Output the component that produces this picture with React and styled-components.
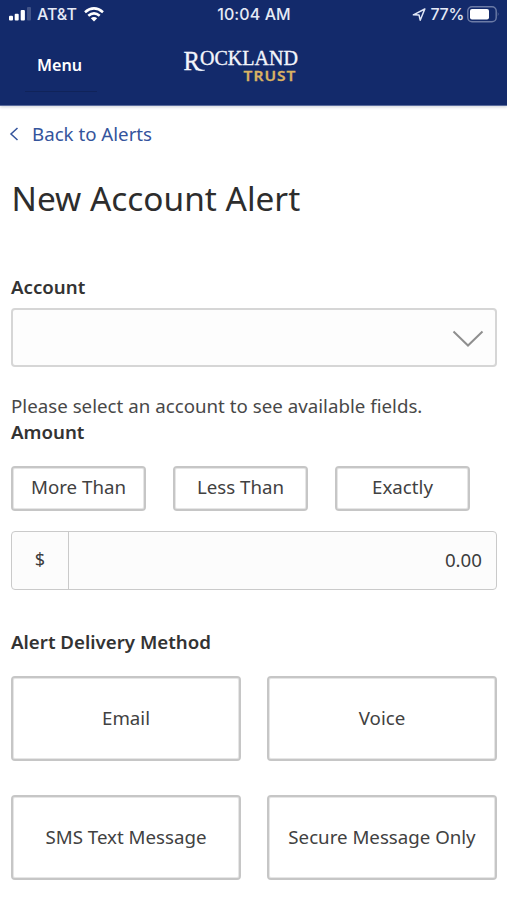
import React, { useState } from 'react';
import styled, { createGlobalStyle } from 'styled-components';


const GlobalStyle = createGlobalStyle`
    * {
        box-sizing: border-box;
    }
    body {
        margin: 0;
        background: #fff;
        color: #3d3d3d;
        font-family: "Noto Sans", "Open Sans", sans-serif;
        font-size: 18.7px;
    }
    button, input {
        font: inherit;
        color: inherit;
    }
`

const Page = styled.div`
    width: 507px;
    height: 900px;
    overflow: hidden;
`

const Header = styled.header`
    height: 106px;
    background: #132a6b;
    border-bottom: 1px solid #5a6b9c;
    box-shadow: 0 1px 3px rgba(0, 20, 60, .2);
    color: #fff;
`

const StatusBar = styled.div`
    display: grid;
    grid-template-columns: 1fr auto 1fr;
    align-items: center;
    height: 28px;
    padding: 0 7px 0 8px;
    font-family: Inter, sans-serif;
    font-size: 16px;
    font-weight: 500;
    line-height: 28px;
    color: #e6eaf6;

    svg {
        display: block;
    }
`

const StatusGroup = styled.div`
    display: flex;
    align-items: center;
    justify-content: ${({ $end }) => $end ? 'flex-end' : 'flex-start'};
`

const Carrier = styled.span`
    width: 40px;
    margin: 0 7px 0 6px;
    letter-spacing: 0;
`

const Clock = styled.span`
    letter-spacing: .1px;
`

const Percent = styled.span`
    margin: 0 3px 0 4px;
    letter-spacing: -.3px;
`

const NavBar = styled.div`
    display: flex;
    padding-left: 25px;
`

const MenuButton = styled.button`
    width: 72px;
    height: 64px;
    padding: 10px 0 0 12px;
    border: 0;
    border-bottom: 1px solid #10235a;
    background: none;
    font-size: 16.2px;
    font-weight: 600;
    text-align: left;
`

const Logo = styled.svg`
    margin: 14px 0 0 82px;
`

const Content = styled.main`
    padding: 0 10px 0 11px;
`

const BackLink = styled.a`
    display: flex;
    align-items: center;
    gap: 13px;
    height: 55px;
    margin-left: -2px;
    color: #34549c;
    font-size: 18.7px;
`

const Title = styled.h1`
    height: 71px;
    margin: 0 0 43px;
    font-size: 33.4px;
    font-weight: 400;
    line-height: 74px;
    text-indent: .5px;
    color: #2d2d2d;
`

const Label = styled.div`
    height: 26px;
    font-weight: 600;
    line-height: 24px;
    color: #333;
    margin-bottom: ${({ $gap }) => $gap}px;
`

const Select = styled.button`
    display: flex;
    align-items: center;
    justify-content: flex-end;
    width: 100%;
    height: 59px;
    padding: 2px 11px 0 12px;
    border: 2px solid #d6d6d6;
    border-radius: 4px;
    background: #fdfdfd;
`

const Help = styled.p`
    height: 26px;
    margin: 27px 0 0;
    line-height: 24px;
    letter-spacing: .02px;
    color: #484848;
`

const Conditions = styled.div`
    display: grid;
    grid-template-columns: repeat(3, 135px);
    column-gap: 27px;
`

const Methods = styled.div`
    display: grid;
    grid-template-columns: repeat(2, 1fr);
    column-gap: 26px;
    row-gap: 34px;
`

const Choice = styled.button`
    height: ${({ $tall }) => $tall ? 85 : 45}px;
    padding: 0 0 ${({ $tall }) => $tall ? 3 : 4}px;
    border: 2px solid #c6c6c6;
    border-radius: 4px;
    background: #fff;
    box-shadow: inset 0 0 0 1px #e6e6e6;
    color: #414141;
    white-space: nowrap;
`

const AmountField = styled.div`
    display: flex;
    height: 59px;
    margin: 20px 0 40px;
    border: 1px solid #cacaca;
    border-radius: 4px;
    background: #fcfcfc;
`

const Currency = styled.span`
    width: 57px;
    border-right: 1px solid #cacaca;
    font-size: 18px;
    line-height: 55px;
    text-align: center;
`

const AmountInput = styled.input`
    flex: 1;
    min-width: 0;
    padding: 0 14px 3px;
    border: 0;
    background: none;
    text-align: right;
`


const Signal = () => (
    <svg width="23" height="14" viewBox="0 0 23 14" fill="#fff">
        <rect x="1" y="8.8" width="4" height="4.8" rx="1" />
        <rect x="6.7" y="6.8" width="4" height="6.8" rx="1" />
        <rect x="12.7" y="3" width="4.2" height="10.6" rx="1" />
        <rect x="19" y="0" width="4" height="13.6" rx="1" opacity=".2" />
    </svg>
)

const Wifi = () => (
    <svg width="20" height="15" viewBox="0 0 20 15" fill="none" stroke="#fff" strokeWidth="2.6">
        <path d="M1 5.2 Q10 -2.4 19 5.2" />
        <path d="M4.3 8.8 Q10 4 15.7 8.8" />
        <path d="M10 14.5 L6.8 11.3 Q10 8.6 13.2 11.3Z" fill="#fff" stroke="none" />
    </svg>
)

const Arrow = () => (
    <svg width="14" height="14" viewBox="0 0 14 14" fill="none" stroke="#dfe5f5" strokeWidth="1.5" strokeLinejoin="round">
        <path d="M12.8 2 L1.4 7.8 L7 7.9 L8.2 13.2Z" />
    </svg>
)

const Battery = () => (
    <svg width="33" height="17" viewBox="0 0 33 17">
        <rect x=".8" y=".8" width="28.4" height="15" rx="4.2" fill="none" stroke="#6c7ba6" strokeWidth="1.4" />
        <rect x="3" y="3" width="19" height="10.6" rx="2" fill="#fff" />
        <path d="M30.8 6 Q32.6 8.3 30.8 10.6Z" fill="#6c7ba6" />
    </svg>
)

const RocklandLogo = () => (
    <Logo width="124" height="48" viewBox="0 0 124 48">
        <g fontFamily="Liberation Serif, serif" fill="#f3f5fb" stroke="#f3f5fb" strokeWidth=".35">
            <text x="4.5" y="27.5" fontSize="27" textLength="16.5" lengthAdjust="spacingAndGlyphs">R</text>
            <text x="21" y="23.2" fontSize="20" textLength="98" lengthAdjust="spacingAndGlyphs">OCKLAND</text>
            {/* swash under the O */}
            <path d="M16.5 23.5 Q20 28 26 28.2 Q20.5 30 17 27Z" />
        </g>
        <text x="64.5" y="38.8" fontFamily="Noto Sans, sans-serif" fontSize="15" fontWeight="600" fill="#d9b263" stroke="#d9b263" strokeWidth=".3" textLength="53" lengthAdjust="spacingAndGlyphs" letterSpacing="1">TRUST</text>
    </Logo>
)


const App = () => {
    const [amount, setAmount] = useState('0.00')

    return (
        <Page>
            <GlobalStyle />
            <Header>
                <StatusBar>
                    <StatusGroup>
                        <Signal />
                        <Carrier>AT&amp;T</Carrier>
                        <Wifi />
                    </StatusGroup>
                    <Clock>10:04 AM</Clock>
                    <StatusGroup $end>
                        <Arrow />
                        <Percent>77%</Percent>
                        <Battery />
                    </StatusGroup>
                </StatusBar>
                <NavBar>
                    <MenuButton>Menu</MenuButton>
                    <RocklandLogo />
                </NavBar>
            </Header>

            <Content>
                <BackLink>
                    <svg width="10" height="14" viewBox="0 0 10 14" fill="none" stroke="#34549c" strokeWidth="1.5">
                        <path d="M8.5 1 L2 7 L8.5 13" />
                    </svg>
                    Back to Alerts
                </BackLink>
                <Title>New Account Alert</Title>

                <Label $gap={7}>Account</Label>
                <Select aria-label="Account">
                    <svg width="32" height="18" viewBox="0 0 32 18" fill="none" stroke="#8f8f8f" strokeWidth="2">
                        <path d="M1.5 1.5 L16 15.5 L30.5 1.5" />
                    </svg>
                </Select>
                <Help>Please select an account to see available fields.</Help>

                <Label $gap={20}>Amount</Label>
                <Conditions>
                    <Choice>More Than</Choice>
                    <Choice>Less Than</Choice>
                    <Choice>Exactly</Choice>
                </Conditions>
                <AmountField>
                    <Currency>$</Currency>
                    <AmountInput value={amount} onChange={(e) => setAmount(e.target.value)} />
                </AmountField>

                <Label $gap={20}>Alert Delivery Method</Label>
                <Methods>
                    <Choice $tall>Email</Choice>
                    <Choice $tall>Voice</Choice>
                    <Choice $tall>SMS Text Message</Choice>
                    <Choice $tall>Secure Message Only</Choice>
                </Methods>
            </Content>
        </Page>
    )
}


export default App
